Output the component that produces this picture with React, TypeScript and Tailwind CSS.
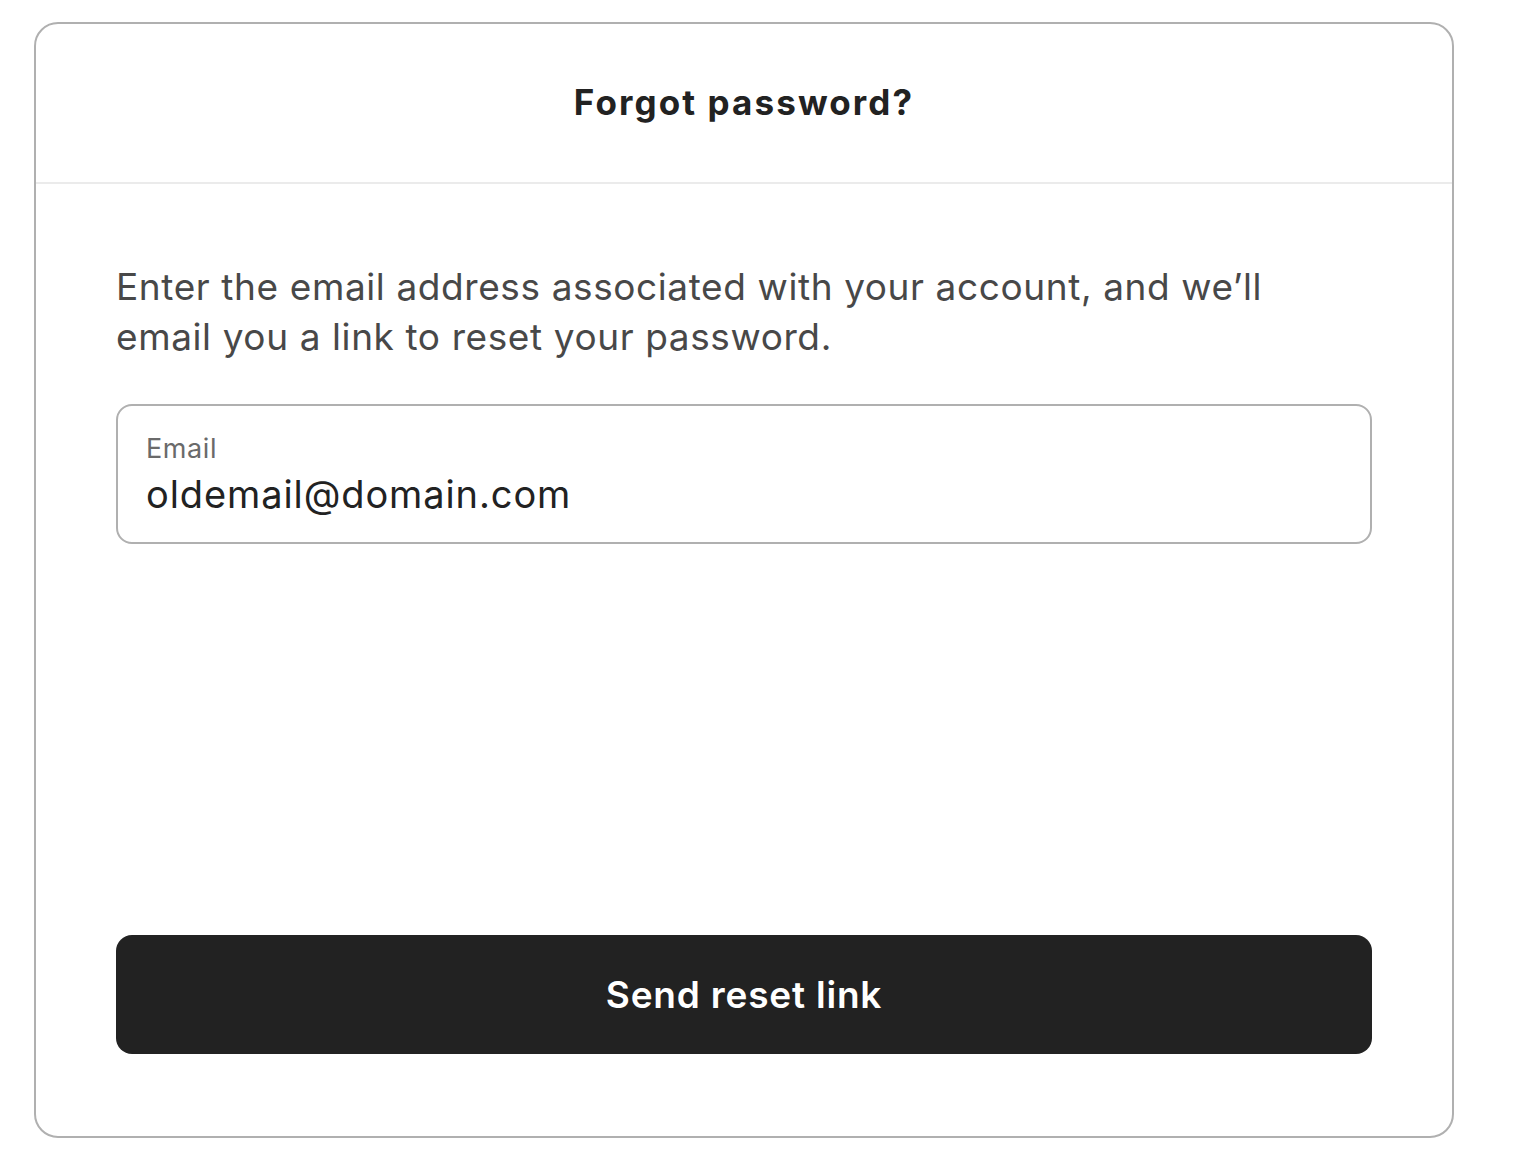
import React from "react";

const App = () => {
  return (
    <div
      className="min-h-screen bg-white pl-[34px] pt-[22px]"
      style={{ fontFamily: "Inter, 'Noto Sans', sans-serif" }}
    >
      {/* Card */}
      <div className="w-[1420px] h-[1116px] border-2 border-[#b0b0b0] rounded-[24px] flex flex-col">
        {/* Header */}
        <div className="h-[160px] shrink-0 flex items-center justify-center border-b-2 border-[#ebebeb] pb-[2px]">
          <h1 className="text-[35px] font-bold text-[#222222] tracking-[2.1px]">
            Forgot password?
          </h1>
        </div>

        {/* Body */}
        <div className="flex-1 flex flex-col px-[80px] pt-[78px] pb-[82px]">
          <p className="text-[37px] leading-[50px] text-[#484848] tracking-[0.6px]">
            Enter the email address associated with your account, and we’ll
            <br />
            email you a link to reset your password.
          </p>

          <div className="mt-[42px] h-[140px] border-2 border-[#b0b0b0] rounded-[16px] px-[28px] pt-[6px] flex flex-col justify-center">
            <label className="text-[27px] leading-[34px] text-[#6a6a6a] tracking-[0.6px]">
              Email
            </label>
            <div className="text-[38px] leading-[56px] text-[#222222] tracking-[0.9px]">
              oldemail@domain.com
            </div>
          </div>

          <div className="flex-1" />

          <button className="h-[119px] w-full bg-[#222222] rounded-[16px] text-white text-[37px] font-semibold tracking-[0.8px]">
            Send reset link
          </button>
        </div>
      </div>
    </div>
  );
};

export default App;
